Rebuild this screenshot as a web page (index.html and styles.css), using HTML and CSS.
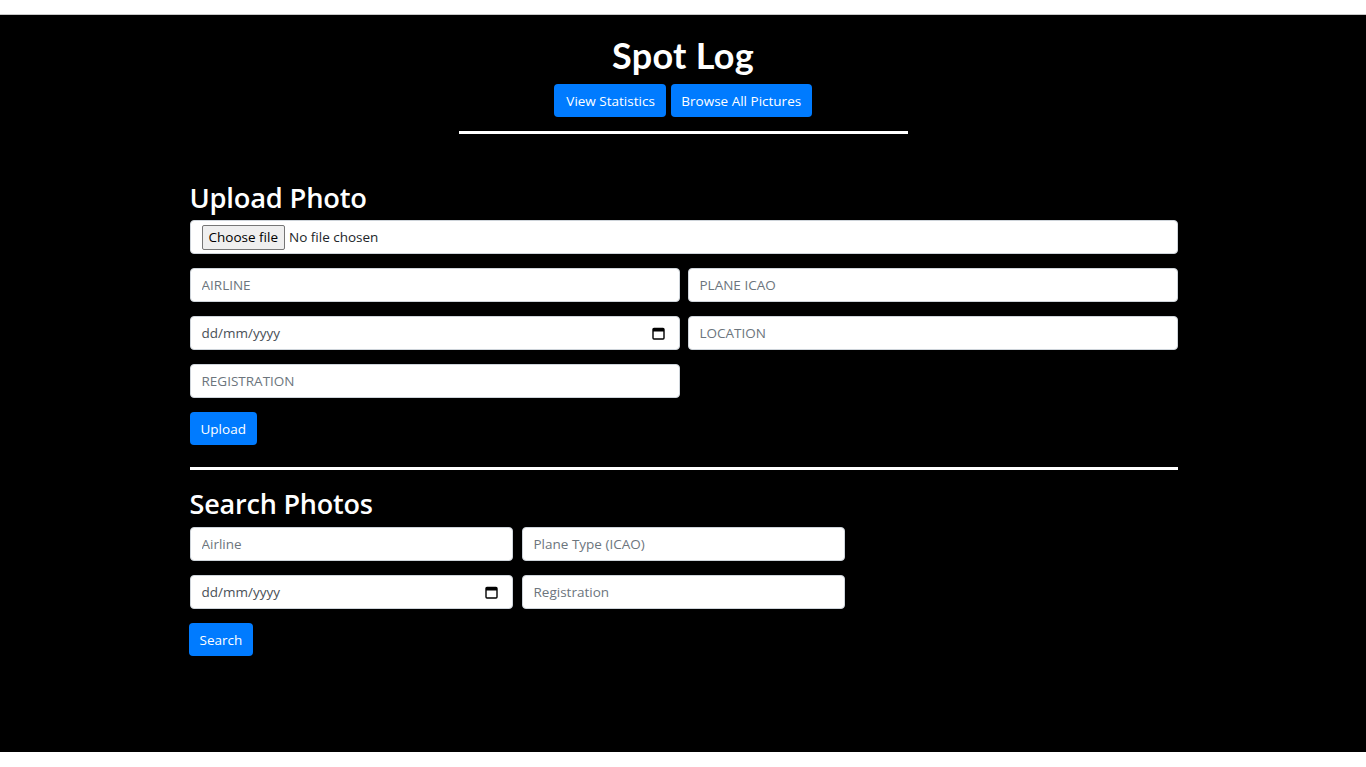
FILE: index.html
```html
<!DOCTYPE html>
<html lang="en">
<head>
<meta charset="utf-8">
<title>Spot Log</title>
<link rel="stylesheet" href="styles.css">
</head>
<body>
<main class="page">
  <header class="top">
    <h1 class="brand">Spot Log</h1>
    <nav class="top-actions">
      <button class="btn" type="button">View Statistics</button>
      <button class="btn" type="button">Browse All Pictures</button>
    </nav>
    <div class="rule rule-short"></div>
  </header>

  <section class="container">
    <h2 class="section-title">Upload Photo</h2>
    <div class="field file-field">
      <span class="file-btn">Choose file</span>
      <span class="file-name">No file chosen</span>
    </div>
    <div class="grid-2">
      <input class="field" type="text" placeholder="AIRLINE">
      <input class="field" type="text" placeholder="PLANE ICAO">
      <div class="field date-field"><span>dd/mm/yyyy</span>
        <svg class="cal" viewBox="0 0 13 13" width="13" height="13"><rect x="1" y="1.5" width="11" height="10.5" rx="1" fill="none" stroke="#000" stroke-width="1.4"/><rect x="1" y="1.5" width="11" height="3" fill="#000"/></svg>
      </div>
      <input class="field" type="text" placeholder="LOCATION">
      <input class="field" type="text" placeholder="REGISTRATION">
    </div>
    <button class="btn btn-upload" type="button">Upload</button>
    <div class="rule rule-full"></div>

    <h2 class="section-title search-title">Search Photos</h2>
    <div class="grid-search">
      <input class="field" type="text" placeholder="Airline">
      <input class="field" type="text" placeholder="Plane Type (ICAO)">
      <div class="field date-field"><span>dd/mm/yyyy</span>
        <svg class="cal" viewBox="0 0 13 13" width="13" height="13"><rect x="1" y="1.5" width="11" height="10.5" rx="1" fill="none" stroke="#000" stroke-width="1.4"/><rect x="1" y="1.5" width="11" height="3" fill="#000"/></svg>
      </div>
      <input class="field" type="text" placeholder="Registration">
    </div>
    <button class="btn btn-search" type="button">Search</button>
  </section>
</main>
</body>
</html>
```

FILE: styles.css
```css
* { box-sizing: border-box; }
html, body { margin: 0; padding: 0; background: #fff; }
body {
  padding: 14px 0 15px;
  font-family: "Open Sans", "Noto Sans", sans-serif;
}
.page {
  background: #000;
  height: 738px;
  border-top: 1px solid #c8c8c8;
  color: #fff;
  overflow: hidden;
}
.top {
  display: flex;
  flex-direction: column;
  align-items: center;
  padding-top: 20px;
}
.brand {
  margin: 0;
  font-family: "Lato", sans-serif;
  font-weight: 700;
  font-size: 36px;
  line-height: 40px;
  letter-spacing: 0.3px;
}
.top-actions {
  display: flex;
  gap: 5px;
  margin-top: 9px;
}
.btn {
  background: #007bff;
  color: #fff;
  border: 0;
  border-radius: 4px;
  height: 33px;
  padding: 0 11px;
  font-family: "Open Sans", "Noto Sans", sans-serif;
  font-size: 13.5px;
  cursor: pointer;
}
.top-actions .btn { padding: 0 10.5px; }
.top-actions .btn:first-child { padding: 0 11px 0 12px; }
.rule { background: #fff; height: 3px; }
.rule-short { width: 449px; margin-top: 14px; }
.container {
  width: 989px;
  margin: 0 auto;
  padding-left: 1px;
}
.section-title {
  margin: 45px 0 0;
  font-size: 27.3px;
  line-height: 38px;
  font-weight: 600;
  letter-spacing: -0.2px;
}
.search-title { margin-top: 15px; font-size: 27px; }
.field {
  display: flex;
  align-items: center;
  width: 100%;
  height: 34px;
  background: #fff;
  border: 1px solid #ced4da;
  border-radius: 4px;
  padding: 0 11px;
  font-family: "Open Sans", "Noto Sans", sans-serif;
  font-size: 13.5px;
  color: #495057;
  outline: none;
}
.field::placeholder { color: #6c757d; opacity: 1; }
.file-field { margin-top: 3px; gap: 4px; color: #212529; }
.file-btn {
  background: #efefef;
  border: 1px solid #767676;
  border-radius: 2px;
  height: 25px;
  padding: 0 6px;
  display: flex;
  align-items: center;
  color: #000;
  font-size: 13.5px;
}
.file-name { color: #212529; }
.date-field { justify-content: space-between; color: #495057; padding-right: 14px; }
.cal { display: block; }
.grid-2 {
  display: grid;
  grid-template-columns: 490px 490px;
  column-gap: 8px;
  row-gap: 14px;
  margin-top: 14px;
}
.btn-upload { margin-top: 14px; display: block; }
.rule-full { width: 988px; margin-top: 22px; }
.grid-search {
  display: grid;
  grid-template-columns: 323px 323px;
  column-gap: 9px;
  row-gap: 14px;
  margin-top: 4px;
}
.btn-search { margin-top: 14px; display: block; margin-left: -1px; }
```
